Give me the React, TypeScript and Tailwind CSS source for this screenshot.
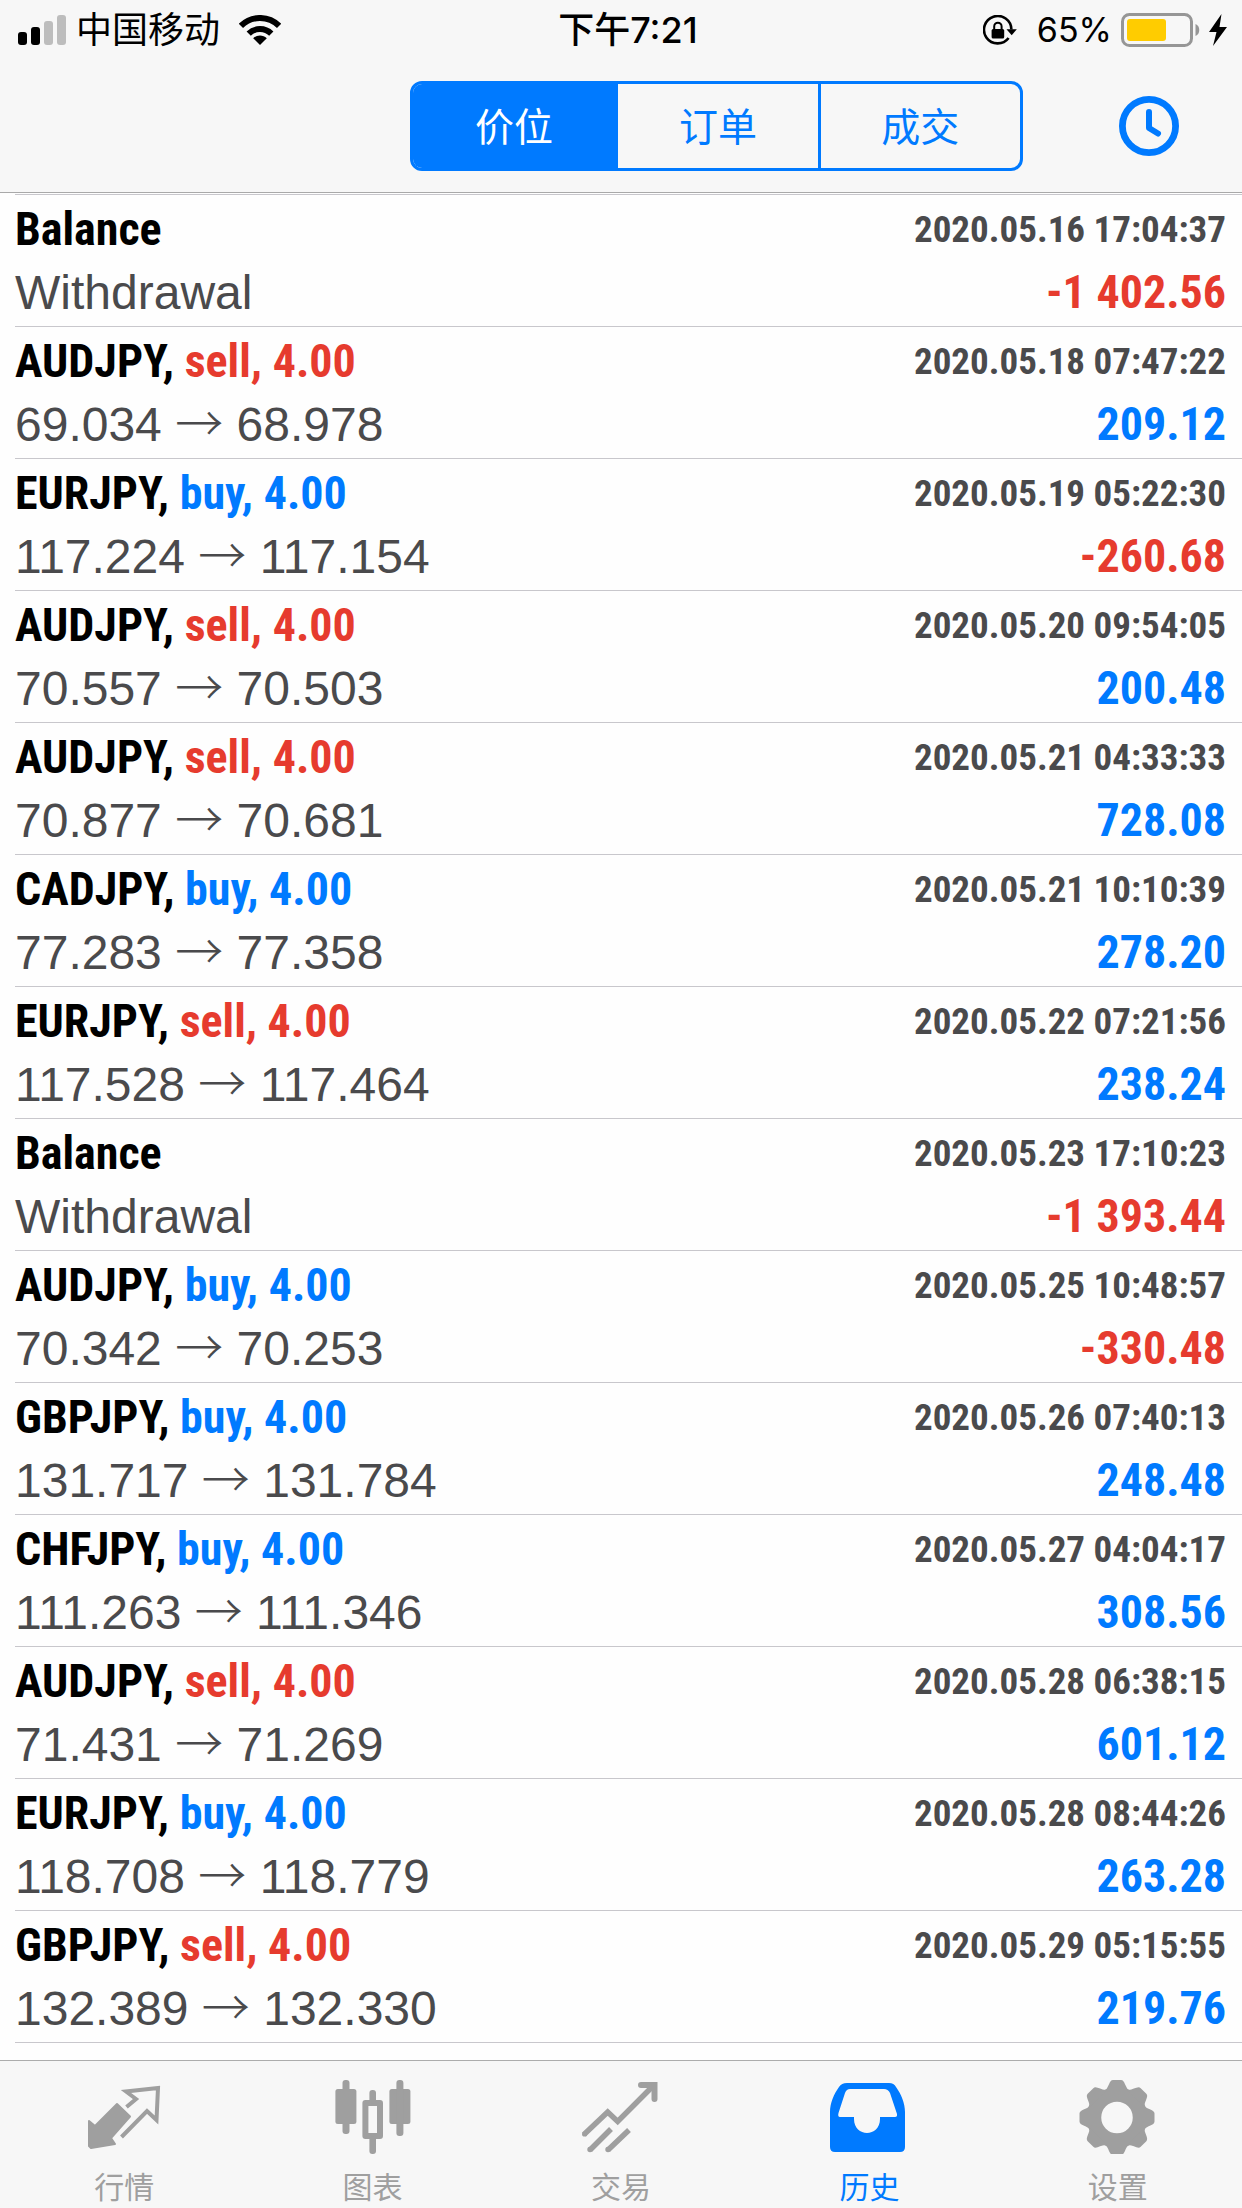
import { useState, type ReactNode } from 'react'

interface Deal {
  time: string
  amount: string
  symbol?: string
  side?: 'buy' | 'sell'
  open?: string
  close?: string
}

const deals: Deal[] = [
  { time: '2020.05.16 17:04:37', amount: '-1 402.56' },
  { time: '2020.05.18 07:47:22', amount: '209.12', symbol: 'AUDJPY', side: 'sell', open: '69.034', close: '68.978' },
  { time: '2020.05.19 05:22:30', amount: '-260.68', symbol: 'EURJPY', side: 'buy', open: '117.224', close: '117.154' },
  { time: '2020.05.20 09:54:05', amount: '200.48', symbol: 'AUDJPY', side: 'sell', open: '70.557', close: '70.503' },
  { time: '2020.05.21 04:33:33', amount: '728.08', symbol: 'AUDJPY', side: 'sell', open: '70.877', close: '70.681' },
  { time: '2020.05.21 10:10:39', amount: '278.20', symbol: 'CADJPY', side: 'buy', open: '77.283', close: '77.358' },
  { time: '2020.05.22 07:21:56', amount: '238.24', symbol: 'EURJPY', side: 'sell', open: '117.528', close: '117.464' },
  { time: '2020.05.23 17:10:23', amount: '-1 393.44' },
  { time: '2020.05.25 10:48:57', amount: '-330.48', symbol: 'AUDJPY', side: 'buy', open: '70.342', close: '70.253' },
  { time: '2020.05.26 07:40:13', amount: '248.48', symbol: 'GBPJPY', side: 'buy', open: '131.717', close: '131.784' },
  { time: '2020.05.27 04:04:17', amount: '308.56', symbol: 'CHFJPY', side: 'buy', open: '111.263', close: '111.346' },
  { time: '2020.05.28 06:38:15', amount: '601.12', symbol: 'AUDJPY', side: 'sell', open: '71.431', close: '71.269' },
  { time: '2020.05.28 08:44:26', amount: '263.28', symbol: 'EURJPY', side: 'buy', open: '118.708', close: '118.779' },
  { time: '2020.05.29 05:15:55', amount: '219.76', symbol: 'GBPJPY', side: 'sell', open: '132.389', close: '132.330' },
]

const segments = ['价位', '订单', '成交']

function StatusBar() {
  return (
    <div className="flex h-[60px] items-center justify-between pl-[18px] pr-[15px] font-['Inter','Noto_Sans_CJK_SC',sans-serif] text-[36px] leading-[60px] text-black">
      <div className="flex items-center">
        <svg width="48" height="30" viewBox="0 0 48 30">
          <rect x="0" y="17" width="9" height="13" rx="3" />
          <rect x="13" y="12" width="9" height="18" rx="3" />
          <rect x="26" y="6" width="9" height="24" rx="3" fill="#bdbdbd" />
          <rect x="39" y="0" width="9" height="30" rx="3" fill="#bdbdbd" />
        </svg>
        <span className="ml-[10px]">中国移动</span>
        <svg className="ml-[19px]" width="42" height="30" viewBox="0 0 42 30">
          <g fill="none" stroke="#000" strokeWidth="6">
            <path d="M1.9 10.9a27 27 0 0 1 38.2 0" />
            <path d="M9.7 18.7a16 16 0 0 1 22.6 0" />
          </g>
          <path d="M21 30l-6.8-6.8c3.8-3.6 9.8-3.6 13.6 0z" />
        </svg>
      </div>
      <span className="pr-2 font-medium">下午7:21</span>
      <div className="flex items-center">
        <svg width="34" height="30" viewBox="0 0 34 30">
          <path d="M28.4 14.5A13.7 13.7 0 1 0 25.6 23" fill="none" stroke="#000" strokeWidth="2.6" />
          <path d="M23.5 14.2h10.3l-5.1 6z" />
          <rect x="8.6" y="14" width="12.6" height="9.6" rx="1.5" />
          <path d="M11.2 15v-3.6a3.7 3.7 0 0 1 7.4 0V15" fill="none" stroke="#000" strokeWidth="2" />
        </svg>
        <span className="ml-5 text-[34px]">65%</span>
        <svg className="ml-[9px]" width="79" height="34" viewBox="0 0 79 34">
          <rect x="1.5" y="1.5" width="69" height="31" rx="7" fill="none" stroke="#969696" strokeWidth="3" />
          <rect x="6" y="6" width="39" height="22" rx="3" fill="#fc0" />
          <path d="M74.5 11c5 1.5 5 10.5 0 12z" fill="#969696" />
        </svg>
        <svg className="ml-[9px]" width="18" height="32" viewBox="0 0 18 32">
          <path d="M12.5 0L0 18h7.5L4 32 18 13h-7.5z" />
        </svg>
      </div>
    </div>
  )
}

function Toolbar() {
  const [active, setActive] = useState(0)

  return (
    <div className="flex h-[132px] items-center justify-end gap-24 pr-[63px]">
      <div className="grid h-[90px] w-[52%] grid-cols-3 overflow-hidden rounded-xl border-3 border-[#007aff] font-['Noto_Sans_CJK_SC',sans-serif] text-[39px]">
        {segments.map((label, i) => (
          <button
            key={label}
            onClick={() => setActive(i)}
            className={`pb-1 ${i > 0 ? 'border-l-3 border-[#007aff]' : ''} ${i === active ? 'bg-[#007aff] text-white' : 'text-[#007aff]'}`}
          >
            {label}
          </button>
        ))}
      </div>
      <button aria-label="时间">
        <svg width="60" height="60" viewBox="0 0 60 60" fill="none" stroke="#007aff" strokeWidth="6.8" strokeLinecap="round" strokeLinejoin="round">
          <circle cx="30" cy="30" r="26.6" />
          <path d="M30 16v16l9 5.5" strokeWidth="6" />
        </svg>
      </button>
    </div>
  )
}

function DealRow({ deal }: { deal: Deal }) {
  return (
    <li className="border-b border-[#c8c7cc] pt-[3px] pb-[2px] pr-4 leading-[63px]">
      <div className="flex items-center justify-between font-['Roboto_Condensed',sans-serif] font-bold">
        <p className="text-[46px] text-black">
          {deal.symbol ? (
            <>
              {deal.symbol},{' '}
              <span className={deal.side === 'buy' ? 'text-[#007aff]' : 'text-[#e63b2e]'}>{deal.side}, 4.00</span>
            </>
          ) : (
            'Balance'
          )}
        </p>
        <time className="text-[37px] text-[#4a4a4c]">{deal.time}</time>
      </div>
      <div className="flex items-center justify-between">
        <p className="font-['Liberation_Sans',sans-serif] text-[48px] text-[#4a4a4c]">
          {deal.symbol ? (
            <>
              {deal.open} <span className="font-['Noto_Sans_CJK_SC',sans-serif] font-light leading-none">→</span> {deal.close}
            </>
          ) : (
            'Withdrawal'
          )}
        </p>
        <p
          className={`font-['Roboto_Condensed',sans-serif] text-[46px] font-bold ${deal.amount.startsWith('-') ? 'text-[#e63b2e]' : 'text-[#007aff]'}`}
        >
          {deal.amount}
        </p>
      </div>
    </li>
  )
}

function TabIcon({ children }: { children: ReactNode }) {
  return (
    <svg width="78" height="78" viewBox="0 0 78 78" fill="currentColor">
      {children}
    </svg>
  )
}

const tabs = [
  {
    label: '行情',
    icon: (
      <TabIcon>
        <path d="M32 28L45 40.500 26 62l4 6L6 72 4 70V45l6 5z" stroke="currentColor" strokeWidth="2" strokeLinejoin="round" />
        <path d="M41.500 31l9.500-8-10-7.500 32-3.500-1.500 32L62 35 36.500 61" fill="none" stroke="currentColor" strokeWidth="4" />
      </TabIcon>
    ),
  },
  {
    label: '图表',
    icon: (
      <TabIcon>
        <rect x="1.4" y="13" width="21" height="35" rx="2.5" />
        <rect x="8.5" y="4" width="7" height="54" rx="3" />
        <rect x="31.4" y="27" width="14.6" height="33" fill="none" stroke="currentColor" strokeWidth="6" strokeLinejoin="round" />
        <rect x="35.4" y="14" width="6.6" height="14" rx="3" />
        <rect x="35.4" y="60" width="6.6" height="18" rx="3" />
        <rect x="55.4" y="13" width="21" height="35" rx="2.5" />
        <rect x="62.4" y="4" width="7" height="56" rx="3" />
      </TabIcon>
    ),
  },
  {
    label: '交易',
    icon: (
      <TabIcon>
        <g fill="none" stroke="currentColor" strokeWidth="5.5">
          <path d="M2 58.500L25.700 36l10 9.500L71 10" />
          <path d="M59 9h13.500v14" strokeWidth="6" strokeLinecap="round" />
          <path d="M29 53L8 74M47 54L26 74" />
        </g>
        <circle cx="2.6" cy="58" r="2.6" />
        <circle cx="8" cy="73.5" r="2.7" />
        <circle cx="26" cy="73.5" r="2.7" />
      </TabIcon>
    ),
  },
  {
    label: '历史',
    icon: (
      <TabIcon>
        <path
          fillRule="evenodd"
          d="M17 7H59Q64 7 66 11C71 18 75 27 75 36V71Q75 76 70 76H5Q0 76 0 71V36C0 27 4 18 9 11Q11.500 7 17 7ZM20 13Q16.500 13 15 17L8.500 37Q7.500 41 10 41H24V43C24 61.500 50 61.500 50 43V41H65Q67.500 41 67 38L60 17Q58 13 54 13Z"
        />
      </TabIcon>
    ),
  },
  {
    label: '设置',
    icon: (
      <TabIcon>
        <g transform="translate(38 41.5)">
          <circle r="23" fill="none" stroke="currentColor" strokeWidth="14.5" />
          {[0, 45, 90, 135, 180, 225, 270, 315].map((angle) => (
            <path key={angle} d="M-12-27C-8-30-8-37.500-4-37.500H4C8-37.500 8-30 12-27Z" transform={`rotate(${angle})`} />
          ))}
        </g>
      </TabIcon>
    ),
  },
]

function TabBar() {
  const [active, setActive] = useState(3)

  return (
    <nav className="grid grid-cols-5 border-t border-[#acacac] bg-[#f7f7f7] pt-[15px] pb-[3px]">
      {tabs.map((tab, i) => (
        <button
          key={tab.label}
          onClick={() => setActive(i)}
          className={`flex flex-col items-center gap-[11px] ${i === active ? 'text-[#007aff]' : 'text-[#9f9f9f]'}`}
        >
          {tab.icon}
          <span className="font-['Noto_Sans_CJK_SC',sans-serif] text-[30px] leading-[40px]">{tab.label}</span>
        </button>
      ))}
    </nav>
  )
}

export default function App() {
  return (
    <div className="flex min-h-screen flex-col bg-[#fefefe]">
      <header className="border-b border-[#a9a9a9] bg-[#f7f7f7]">
        <StatusBar />
        <Toolbar />
      </header>
      <main className="flex-1 pt-px pl-[15px]">
        <ul className="border-t border-[#c8c7cc]">
          {deals.map((deal) => (
            <DealRow key={deal.time} deal={deal} />
          ))}
        </ul>
      </main>
      <TabBar />
    </div>
  )
}
